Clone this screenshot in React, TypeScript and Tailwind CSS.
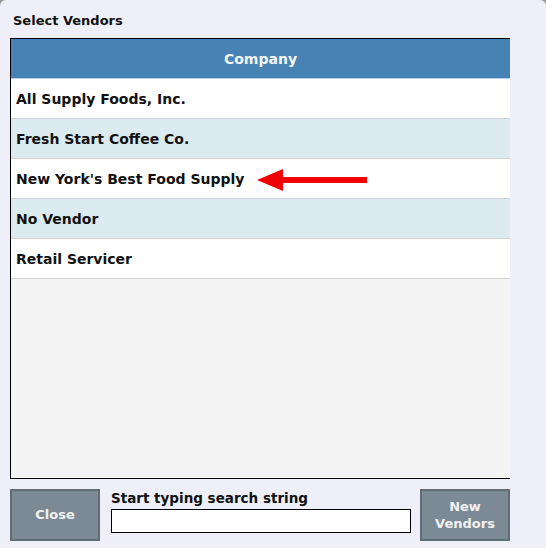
import React from "react";

const vendors = [
  "All Supply Foods, Inc.",
  "Fresh Start Coffee Co.",
  "New York's Best Food Supply",
  "No Vendor",
  "Retail Servicer",
];

export default function App() {
  return (
    <div className="w-[546px] h-[548px] bg-[#9a9a9a] font-['DejaVu_Sans',sans-serif]">
      <div className="h-full rounded-t-[6px] bg-[#efeff9] pl-[10px]">
        {/* Title */}
        <h2 className="h-[38px] pl-[3px] pt-[13px] text-[13px] font-bold leading-[16px] text-[#111]">
          Select Vendors
        </h2>

        {/* Vendor grid */}
        <div className="w-[500px] h-[441px] border-l border-t border-b border-black bg-[#f4f4f4]">
          <div className="h-[40px] flex items-center justify-center pt-[1px] bg-[#4682b4] border-b border-[#b7cfe0] text-[14px] font-bold text-[#f4f8fb]">
            Company
          </div>
          {vendors.map((name, i) => (
            <div
              key={name}
              className={`relative h-[40px] flex items-center pl-[5px] pt-[2px] border-b border-[#d3d3d3] text-[14px] font-bold text-[#111] ${
                i % 2 === 1 ? "bg-[#dcebf0]" : "bg-white"
              }`}
            >
              {name}
              {i === 2 && (
                <svg
                  className="absolute left-[246px] top-[10px]"
                  width="111"
                  height="22"
                  viewBox="0 0 111 22"
                >
                  <polygon
                    points="0,11 26,0 26,8 110,8 110,14 26,14 26,22"
                    fill="#f00000"
                  />
                </svg>
              )}
            </div>
          ))}
        </div>

        {/* Footer controls */}
        <div className="mt-[10px] flex items-start">
          <button className="w-[90px] h-[52px] border-2 border-[#5f6d77] bg-[#7b8a94] text-[13px] font-bold text-[#f2f2f2]">
            Close
          </button>
          <div className="ml-[11px] w-[300px] flex flex-col">
            <label className="h-[20px] pt-[1px] text-[13.5px] font-bold leading-[16px] text-[#111]">
              Start typing search string
            </label>
            <input
              type="text"
              className="h-[24px] w-[300px] border border-black bg-white outline-none"
            />
          </div>
          <button className="ml-[9px] w-[90px] h-[52px] border-2 border-[#5f6d77] bg-[#7b8a94] text-[13px] font-bold leading-[17px] text-[#f2f2f2]">
            New
            <br />
            Vendors
          </button>
        </div>
      </div>
    </div>
  );
}
